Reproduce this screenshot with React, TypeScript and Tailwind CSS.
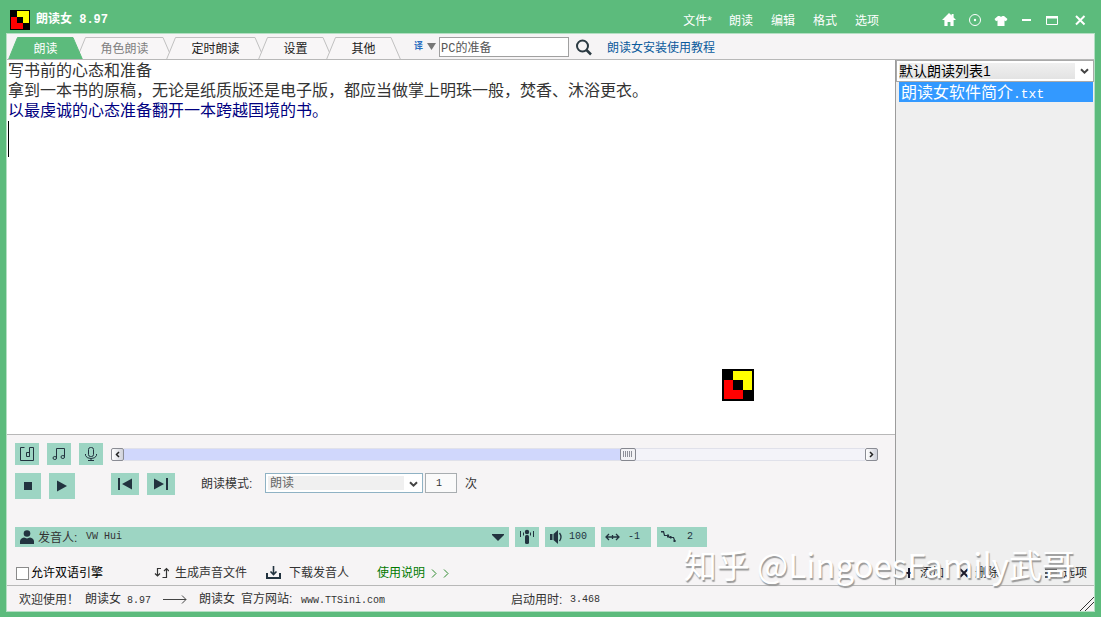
import type { ReactNode } from "react"
import { useState } from "react"

const tabs = [
  { label: "朗读", width: 75, tone: "text-white" },
  { label: "角色朗读", width: 97, tone: "text-[#808080]" },
  { label: "定时朗读", width: 99, tone: "text-[#222]" },
  { label: "设置", width: 75, tone: "text-[#222]" },
  { label: "其他", width: 75, tone: "text-[#222]" },
]

const menus = ["朗读", "编辑", "格式", "选项"]

// latin letters and digits sit on a half-width grid next to the chinese text
function Mono({ children }: { children: ReactNode }) {
  return <span className="whitespace-pre font-['Liberation_Mono',monospace] text-[10px]">{children}</span>
}

function Logo({ size }: { size: number }) {
  return (
    <svg width={size} height={size} viewBox="0 0 32 32" shapeRendering="crispEdges" className="shrink-0">
      <rect width="32" height="32" fill="#000" />
      <rect x="11" y="2" width="19" height="19" fill="#ff0" />
      <rect x="2" y="11" width="19" height="19" fill="#f00" />
      <rect x="2" y="2" width="9" height="9" fill="#000" />
      <rect x="21" y="21" width="9" height="9" fill="#000" />
      <rect x="11" y="11" width="10" height="10" fill="#000" />
    </svg>
  )
}

function Chevron() {
  return (
    <svg width="9" height="7" viewBox="0 0 9 7" className="pointer-events-none absolute right-[4px] top-[7px]">
      <path d="M1 1.2 4.5 4.7 8 1.2" fill="none" stroke="#444" strokeWidth="2" />
    </svg>
  )
}

function WindowButton({ label, children }: { label: string; children: ReactNode }) {
  return (
    <button aria-label={label} className="flex h-5 w-[26px] items-center justify-center text-white">
      <svg width="16" height="16" viewBox="0 0 16 16">{children}</svg>
    </button>
  )
}

function Tab({ label, width, tone, active, onClick }: { label: string; width: number; tone: string; active: boolean; onClick: () => void }) {
  return (
    <button
      role="tab"
      aria-selected={active}
      onClick={onClick}
      style={{ width }}
      className={`relative -mr-[7px] h-[22px] shrink-0 text-xs leading-6 ${active ? "z-10" : ""} ${tone}`}
    >
      <svg className="absolute inset-0" width={width} height="22">
        <path
          d={`M0.5 22.5 L9.5 0.5 H${width - 10} L${width - 0.5} 22.5`}
          fill={active ? "#5cbb7c" : "#f8f6f7"}
          stroke={active ? "#5cbb7c" : "#c0c0c0"}
        />
      </svg>
      <span className="relative">{label}</span>
    </button>
  )
}

function TitleBar() {
  return (
    <header className="flex h-[33px] shrink-0 items-center pl-1 pr-[3px] pt-1.5 text-white">
      <Logo size={20} />
      <h1 className="ml-1.5 whitespace-pre text-xs font-bold">
        朗读女<span className="font-['Liberation_Mono',monospace]"> 8.97</span>
      </h1>
      <nav className="ml-auto mr-[57px] flex gap-[18px] pt-0.5 text-xs">
        <button className="-mr-px">文件*</button>
        {menus.map((m) => (
          <button key={m}>{m}</button>
        ))}
      </nav>
      <WindowButton label="主页">
        <path d="M8 1 1 8h2.4v6h3.2v-4h2.800v4h3.200V8H15l-2.400-2.400V2h-2v1.600z" fill="currentColor" />
      </WindowButton>
      <WindowButton label="状态">
        <circle cx="8" cy="8" r="5.500" fill="none" stroke="currentColor" />
        <circle cx="8" cy="8" r="1.200" fill="currentColor" />
      </WindowButton>
      <WindowButton label="皮肤">
        <path d="M5 4h1.500q1.500 1.600 3 0H11l3.500 3L13 9.300l-1.500-.8V14h-7V8.500L3 9.300 1.500 7z" fill="currentColor" />
      </WindowButton>
      <WindowButton label="最小化">
        <path d="M3 7h9v2H3z" fill="currentColor" />
      </WindowButton>
      <WindowButton label="最大化">
        <path d="M1.500 4.500h11v8h-11z" fill="none" stroke="currentColor" />
        <path d="M1 4h12v2.500H1z" fill="currentColor" />
      </WindowButton>
      <WindowButton label="关闭">
        <path d="m5 4 8.500 8.500m0-8.500L5 12.500" stroke="currentColor" strokeWidth="2" />
      </WindowButton>
    </header>
  )
}

function ToolButton({ label, size, children }: { label: string; size: string; children: ReactNode }) {
  return (
    <button aria-label={label} className={`flex shrink-0 items-center justify-center bg-[#9dd5c3] text-[#22333f] ${size}`}>
      <svg width="18" height="18" viewBox="0 0 18 18">{children}</svg>
    </button>
  )
}

function ValueButton({ label, value, children }: { label: string; value: string; children: ReactNode }) {
  return (
    <button aria-label={label} className="flex h-5 w-[50px] shrink-0 items-center bg-[#9dd5c3] pl-1 text-[#22333f]">
      <svg width="16" height="16" viewBox="0 0 16 16" className="shrink-0">{children}</svg>
      <span className="flex-1 pr-1 text-center font-['Liberation_Mono',monospace] text-[10px]">{value}</span>
    </button>
  )
}

function Controls() {
  const [progress, setProgress] = useState(684)
  const filled = progress / 10

  return (
    <section className="shrink-0 border-t border-[#b8b8b8] bg-[#f6f4f5] pl-2 text-xs text-[#333]">
      <div className="mt-2 flex h-[22px] items-center gap-2">
        <ToolButton label="音频文件" size="h-[22px] w-6">
          <path d="M6.500 2.500h-4v13h13v-13h-4v9" fill="none" stroke="currentColor" />
          <path d="M11.500 7.500h-3v4h3z" fill="none" stroke="currentColor" />
        </ToolButton>
        <ToolButton label="背景音乐" size="h-[22px] w-6">
          <path d="M6.500 13V3.500h8V12" fill="none" stroke="currentColor" />
          <ellipse cx="4.800" cy="13" rx="1.800" ry="1.500" fill="none" stroke="currentColor" />
          <ellipse cx="12.800" cy="12" rx="1.800" ry="1.500" fill="none" stroke="currentColor" />
        </ToolButton>
        <ToolButton label="录音" size="h-[22px] w-6">
          <rect x="6.500" y="2.500" width="5" height="9" rx="2" fill="none" stroke="currentColor" />
          <path d="M3.500 9v1.500q1 3 5.500 3t5.500-3V9M9 13.500V16M6 15.500h6" fill="none" stroke="currentColor" />
        </ToolButton>
        <div className="mr-[17px] flex h-[13px] flex-1 items-center">
          <button aria-label="后退" className="flex h-[13px] w-[13px] items-center justify-center rounded-xs border border-[#8a8c94] bg-gradient-to-r from-white to-[#cfd1da]">
            <svg width="5" height="7" viewBox="0 0 5 7"><path d="M4 1 1.500 3.500 4 6" fill="none" stroke="#222" strokeWidth="1.500" /></svg>
          </button>
          <input
            type="range"
            aria-label="朗读进度"
            min={0}
            max={1000}
            value={progress}
            onChange={(e) => setProgress(Number(e.target.value))}
            style={{ backgroundImage: `linear-gradient(to right, #d0d7fc ${filled}%, #f3f3f9 ${filled}%)` }}
            className="h-[13px] min-w-0 flex-1 appearance-none border-y border-[#e0e1ea] [&::-webkit-slider-thumb]:h-[13px] [&::-webkit-slider-thumb]:w-4 [&::-webkit-slider-thumb]:appearance-none [&::-webkit-slider-thumb]:rounded-xs [&::-webkit-slider-thumb]:border [&::-webkit-slider-thumb]:border-[#85878f] [&::-webkit-slider-thumb]:bg-[#f2f2f5] [&::-webkit-slider-thumb]:bg-[repeating-linear-gradient(to_right,#8d8f98_0_1px,#f2f2f5_1px_2px)] [&::-webkit-slider-thumb]:bg-[length:9px_6px] [&::-webkit-slider-thumb]:bg-center [&::-webkit-slider-thumb]:bg-no-repeat"
          />
          <button aria-label="前进" className="flex h-[13px] w-[13px] items-center justify-center rounded-xs border border-[#8a8c94] bg-gradient-to-r from-white to-[#cfd1da]">
            <svg width="5" height="7" viewBox="0 0 5 7"><path d="M1 1l2.500 2.500L1 6" fill="none" stroke="#222" strokeWidth="1.500" /></svg>
          </button>
        </div>
      </div>

      <div className="mt-2 flex h-[26px] items-start gap-2">
        <ToolButton label="停止" size="h-[26px] w-[26px]">
          <rect x="5" y="5" width="8" height="8" fill="currentColor" />
        </ToolButton>
        <ToolButton label="播放" size="h-[26px] w-[26px]">
          <path d="M4 3.500v11L14 9z" fill="currentColor" />
        </ToolButton>
        <ToolButton label="上一段" size="ml-7 h-[22px] w-7">
          <path d="M2 3h2v12H2zM16 3.500v11L6 9z" fill="currentColor" />
        </ToolButton>
        <ToolButton label="下一段" size="h-[22px] w-7">
          <path d="M14 3h2v12h-2zM2 3.500v11L12 9z" fill="currentColor" />
        </ToolButton>
        <label htmlFor="mode" className="ml-[18px] w-14 whitespace-nowrap leading-[22px]">朗读模式:</label>
        <div className="relative h-5 w-[158px] border border-[#8fb2c4] bg-white p-0.5">
          <select id="mode" className="block h-3.5 w-[136px] appearance-none bg-[#f0f0f0] pl-0.5 leading-[14px] text-[#666] outline-none">
            <option>朗读</option>
          </select>
          <Chevron />
        </div>
        <input
          aria-label="朗读次数"
          defaultValue="1"
          className="-ml-1.5 h-5 w-8 border border-[#a8adb0] bg-[#fafafa] pr-1 text-center font-['Liberation_Mono',monospace] text-[10px]"
        />
        <span className="leading-[22px]">次</span>
      </div>

      <div className="mt-7 flex h-5 gap-1.5 pr-[188px]">
        <button className="flex h-5 min-w-0 flex-1 items-center bg-[#9dd5c3] pl-[5px] pr-[5px] text-[#333]">
          <svg width="14" height="15" viewBox="0 0 14 15" fill="#22333f">
            <circle cx="7" cy="3.500" r="3.300" />
            <path d="M0 14V11q.5-3 4-3.500l3 1 3-1q3.500.5 4 3.500v3z" />
          </svg>
          <span className="ml-1 w-12 whitespace-nowrap pt-0.5 text-left">发音人:</span>
          <Mono>VW Hui</Mono>
          <svg width="12" height="7" viewBox="0 0 12 7" className="ml-auto" fill="#22333f"><path d="M0 0h12v1L6 7 0 1z" /></svg>
        </button>
        <ToolButton label="发音人设置" size="h-5 w-6">
          <circle cx="9" cy="4" r="2.200" fill="currentColor" />
          <rect x="7" y="7" width="4" height="9" rx="1.500" fill="currentColor" />
          <path d="M2.500 3v6M5.500 4.500v3M12.500 4.500v3M15.500 3v6" stroke="currentColor" />
        </ToolButton>
        <ValueButton label="音量" value="100">
          <path d="M1 5h2.500v6H1zM4.500 5 9 1v14l-4.500-4z" fill="currentColor" />
          <path d="M10.500 4q3 4 0 8" fill="none" stroke="currentColor" strokeWidth="1.300" />
        </ValueButton>
        <ValueButton label="语速" value="-1">
          <path d="M1 8h13M4 5 1 8l3 3M11 5l3 3-3 3M7.500 6v4" fill="none" stroke="currentColor" strokeWidth="1.300" />
        </ValueButton>
        <ValueButton label="语调" value="2">
          <path d="M.5 2.500h2l1 4h4l1 2h4l1.500 4" fill="none" stroke="currentColor" strokeWidth="1.200" />
          <path d="M6 5.500h2v3H6zM9 7h1.500v2.500H9zM12.500 11H14.500v2h-2zM0 2h2v1.500H0z" fill="currentColor" />
        </ValueButton>
      </div>

      <div className="mt-3.5 flex h-6 items-center whitespace-nowrap pb-1 pt-1">
        <label className="flex w-[139px] items-center gap-0.5 text-black">
          <input type="checkbox" className="ml-px h-[13px] w-[13px] appearance-none border border-[#8a8a8a] bg-white checked:bg-[#5cbb7c]" />
          允许双语引擎
        </label>
        <button className="flex w-28 items-center gap-1.5">
          <svg width="15" height="14" viewBox="0 0 15 14" fill="none" stroke="#333" strokeWidth="1.200"><path d="M7 2.500H3.500V10M1 7.500 3.500 10 6 7.500M8.500 11.500h4V2.500M10 5l2.500-2.500L15 5" /></svg>
          生成声音文件
        </button>
        <button className="flex w-[111px] items-center gap-2">
          <svg width="15" height="14" viewBox="0 0 15 14" fill="none" stroke="#22333f" strokeWidth="2"><path d="M1 7v5h13V7" /><path d="M7.500 0v8M4.500 5.500l3 3 3-3" strokeWidth="1.600" /></svg>
          下载发音人
        </button>
        <a href="#help" className="flex items-center gap-1.5 text-[#007a00]">
          使用说明
          <svg width="18" height="9" viewBox="0 0 18 9" fill="none" stroke="#2c8a2c"><path d="m1 .5 4 4-4 4M13 .5l4 4-4 4" /></svg>
        </a>
      </div>
    </section>
  )
}

function Playlist() {
  return (
    <aside className="flex w-[199px] shrink-0 flex-col border-l border-[#9c9c9c] bg-[#efefef]">
      <div className="relative h-[22px] shrink-0 border border-[#a9a9a9] bg-white p-0.5">
        <select
          aria-label="朗读列表"
          className="block h-4 w-[176px] appearance-none bg-gradient-to-b from-[#f0f0f0] to-[#e3e3e3] text-sm leading-4 text-black outline-none"
        >
          <option>默认朗读列表1</option>
        </select>
        <Chevron />
      </div>
      <ul className="flex-1 pl-[3px] pr-px">
        <li className="h-5 bg-[#3399ff] pl-0.5 text-base leading-[21px] text-white">
          朗读女软件简介<span className="font-['Liberation_Mono',monospace] text-[13px]">.txt</span>
        </li>
      </ul>
      <div className="flex h-6 items-center pl-2 pr-[7px] text-xs text-[#222]">
        <button className="flex w-[55px] items-center gap-1.5">
          <svg width="10" height="10" viewBox="0 0 10 10" stroke="#1a1a2a" strokeWidth="2"><path d="M5 0v10M0 5h10" /></svg>
          添加
        </button>
        <button className="flex items-center gap-1.5">
          <svg width="10" height="10" viewBox="0 0 10 10" stroke="#1a1a2a" strokeWidth="2"><path d="m1 1 8 8m0-8L1 9" /></svg>
          删除
        </button>
        <button className="ml-auto flex items-center gap-1.5">
          <svg width="12" height="10" viewBox="0 0 12 10" stroke="#222" strokeWidth="1.300"><path d="M0 1h12M0 5h12M0 9h12" /></svg>
          选项
        </button>
      </div>
    </aside>
  )
}

export default function App() {
  const [tab, setTab] = useState("朗读")

  return (
    <div className="relative flex h-screen flex-col overflow-hidden bg-[#5cbb7c] px-1.5 pb-[5px] font-['Liberation_Sans','Noto_Sans_CJK_SC',sans-serif]">
      <TitleBar />

      <div className="flex min-h-0 flex-1 flex-col border border-[#b4dfc3] bg-[#f6f4f5]">
        {/* tabs and search */}
        <div className="flex h-[26px] shrink-0 items-center border-b border-[#b8b8b8] pl-px">
          <div role="tablist" className="flex self-end pr-5">
            {tabs.map((t) => (
              <Tab key={t.label} {...t} active={tab === t.label} onClick={() => setTab(t.label)} />
            ))}
          </div>
          <button className="flex items-center gap-1 text-[9px] font-bold text-[#2a6fc0]">
            译
            <svg width="9" height="7" viewBox="0 0 9 7"><path d="M0 0h9L4.500 7z" fill="#777" /></svg>
          </button>
          <input
            aria-label="搜索"
            defaultValue="PC的准备"
            className="ml-[3px] h-5 w-[130px] border border-[#a0a0a0] bg-white px-px font-['Liberation_Mono','Noto_Sans_CJK_SC',monospace] text-xs text-[#555] outline-none"
          />
          <button aria-label="开始搜索" className="ml-1.5">
            <svg width="18" height="18" viewBox="0 0 18 18" fill="none" stroke="#2b3a42">
              <circle cx="7.500" cy="8" r="5.500" strokeWidth="2" />
              <path d="m11.500 12 4.500 4.500" strokeWidth="2.500" />
            </svg>
          </button>
          <a href="#tutorial" className="ml-3.5 pt-0.5 text-xs text-[#0a5a9c]">朗读女安装使用教程</a>
        </div>

        <div className="flex min-h-0 flex-1">
          <main className="flex min-w-0 flex-1 flex-col">
            <div className="relative min-h-0 flex-1 bg-white">
              <div
                role="textbox"
                aria-label="朗读文本"
                aria-multiline="true"
                contentEditable
                suppressContentEditableWarning
                className="h-full pl-px pt-px text-base leading-5 text-[#333] outline-none"
              >
                <p>写书前的心态和准备</p>
                <p>拿到一本书的原稿，无论是纸质版还是电子版，都应当做掌上明珠一般，焚香、沐浴更衣。</p>
                <p className="text-[#000080]">以最虔诚的心态准备翻开一本跨越国境的书。</p>
                <p className="h-9 border-l border-black" />
              </div>
              <div className="absolute bottom-[33px] right-[141px]">
                <Logo size={32} />
              </div>
            </div>
            <Controls />
          </main>
          <Playlist />
        </div>

        <footer className="relative flex h-[26px] shrink-0 items-center whitespace-nowrap border-t border-[#b8b8b8] pl-3 pt-0.5 text-xs text-[#333]">
          <span className="w-[66px]">欢迎使用！</span>
          <span className="w-[78px]">朗读女<Mono> 8.97</Mono></span>
          <svg width="24" height="9" viewBox="0 0 24 9" fill="none" stroke="#444"><path d="M0 4.500h23M19 .5l4 4-4 4" /></svg>
          <span className="ml-3 flex w-[312px] items-baseline gap-1.5">
            <span>朗读女</span>
            <span className="w-[54px]">官方网站:</span>
            <Mono>www.TTSini.com</Mono>
          </span>
          <span className="w-[59px]">启动用时:</span>
          <Mono>3.468</Mono>
          <svg width="14" height="14" viewBox="0 0 14 14" className="absolute bottom-0 right-0" stroke="#333"><path d="M0 14 14 0M5 14l9-9" /></svg>
        </footer>
      </div>

      <div className="pointer-events-none absolute bottom-[31px] right-[26px] z-20 whitespace-nowrap font-['Noto_Sans_CJK_SC',sans-serif] text-[33px] leading-[44px] text-white [text-shadow:1px_2px_1px_#999]">
        知乎 @LingoesFamily武哥
      </div>
    </div>
  )
}
